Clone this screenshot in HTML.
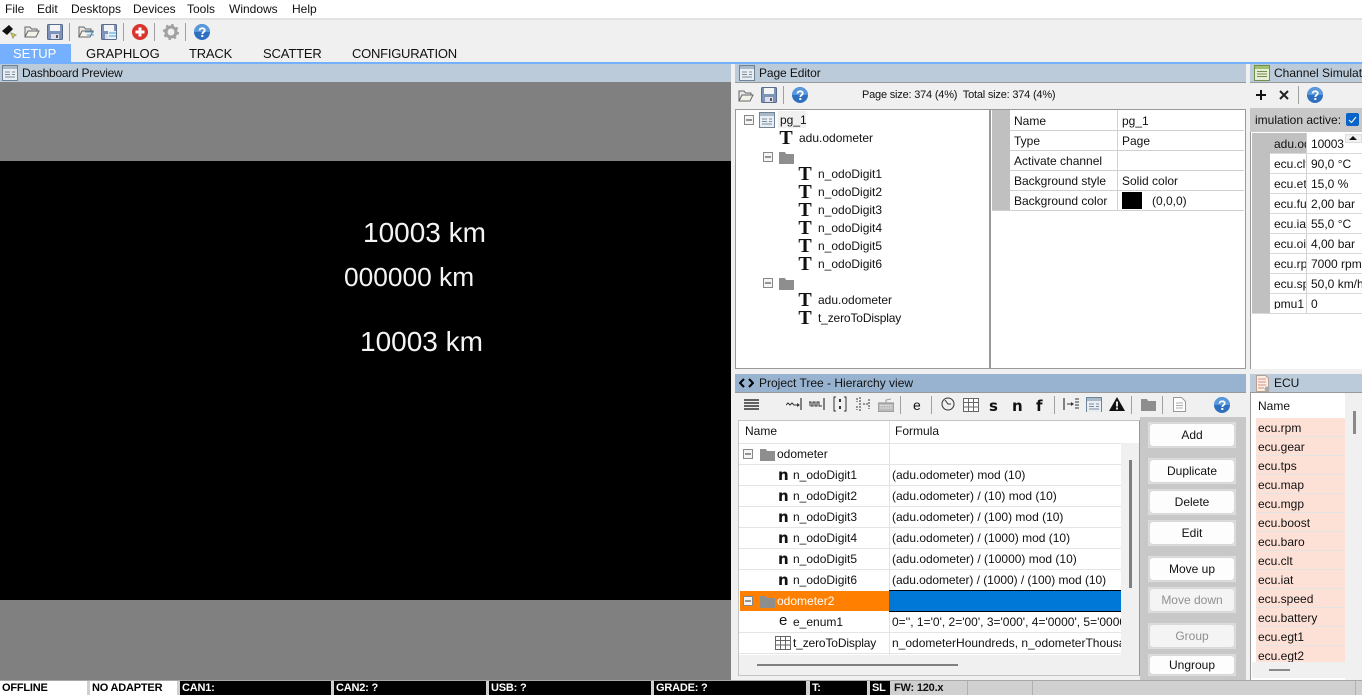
<!DOCTYPE html>
<html><head><meta charset="utf-8">
<style>
html,body{margin:0;padding:0}
body{width:1362px;height:695px;overflow:hidden;position:relative;background:#f0f0f0;font:12px "Liberation Sans",sans-serif;color:#111}
.a,.t,svg{position:absolute}
.t{white-space:nowrap;line-height:14px}
.hd{position:absolute;background:#bccbd9;height:18px;border-bottom:1px solid #999}
.v{position:absolute;width:1px;background:#a0a0a0}
.tt{position:absolute;font:bold 20px/20px "Liberation Serif",serif;color:#111;width:16px;text-align:center;margin-top:-1px}
.l{position:absolute;height:2px;background:#e4e4e4}
.b{position:absolute;left:1148px;width:88px;background:#dcdcdc}
.b div{position:absolute;left:1px;right:1px;top:1px;bottom:1px;background:#fdfdfd;border:1px solid #d8d8d8;border-radius:4px;text-align:center;font-size:12px;box-sizing:border-box}
.off div{background:#f4f4f4;color:#909090}
.s{position:absolute;top:681px;height:14px;font:bold 11px/15px "Liberation Sans",sans-serif;letter-spacing:-.2px;padding-left:2px;box-sizing:border-box;white-space:nowrap;overflow:hidden}
.k{background:#000;color:#fff}
.w{background:#fff;color:#000}
.m{width:10px;height:10px;position:absolute;border:1px solid #888;background:#f4f4f4;box-sizing:border-box}
.m:after{content:"";position:absolute;left:1px;right:1px;top:3px;height:2px;background:#555;transform:scaleY(.6)}
.n{position:absolute;font:bold 15px/14px "DejaVu Sans",sans-serif;color:#111}
.p{position:absolute;left:1256px;width:87px;height:18px;background:#fde0d6;border-bottom:1px solid #e4e4e4;line-height:20px;padding-left:2px;box-sizing:content-box}
.tab{font-size:13px;line-height:15px}
</style></head><body>
<svg width="0" height="0" style="position:absolute"><defs>
<g id="open"><path d="M1 13V3h5l1.500 2H13v2" fill="#e8e8e8" stroke="#666"/><path d="M1 13l3-6h11l-3 6z" fill="#f2f2e8" stroke="#666"/></g>
<g id="save"><rect x=".5" y=".5" width="15" height="15" rx="1" fill="#7d93b8" stroke="#5a6c8c"/><rect x="3" y="1" width="10" height="6" fill="#f4f4f4"/><rect x="4" y="10" width="8" height="5" fill="#dde"/><rect x="9" y="11" width="2" height="3" fill="#556"/></g>
<g id="help"><circle cx="8" cy="8" r="8" fill="#2f6fc0"/><path d="M0 8a8 8 0 0 1 16 0z" fill="#5a98dc"/><path d="M5.500 6.500C5.500 3.500 10.800 3.500 10.800 6.300 10.800 8 8.300 8 8.300 10" fill="none" stroke="#fff" stroke-width="1.800"/><rect x="7.300" y="11" width="2" height="2" fill="#fff"/></g>
<g id="win"><rect x=".5" y=".5" width="15" height="15" fill="#e8eef2" stroke="#6e8496"/><rect x="1" y="1" width="14" height="3" fill="#a8bac8"/><path d="M3 7h5M3 9.500h5M3 12h10M10 7h3M10 9.500h3" stroke="#7a8fa0"/></g>
<g id="fold"><path d="M0 1h6l1 2h8v10H0z" fill="#8e8e8e"/></g>
<g id="tb"><rect x=".5" y=".5" width="15" height="13" fill="#fff" stroke="#666"/><path d="M.5 4.500h15M.5 9h15M5.500.5v13M10.500.5v13" stroke="#666"/></g>
</defs></svg>

<!-- menu -->
<div class="a" style="left:0;top:0;width:1362px;height:18px;background:#fff"></div>
<div class="a" style="left:0;top:18px;width:1362px;height:2px;background:#e2e2e2"></div>
<span class="t" style="left:5px;top:2px">File</span>
<span class="t" style="left:37px;top:2px">Edit</span>
<span class="t" style="left:71px;top:2px">Desktops</span>
<span class="t" style="left:133px;top:2px">Devices</span>
<span class="t" style="left:187px;top:2px">Tools</span>
<span class="t" style="left:229px;top:2px">Windows</span>
<span class="t" style="left:292px;top:2px">Help</span>

<!-- toolbar -->
<svg style="left:2px;top:24px" width="15" height="15"><path d="M0 7L7 1l4 4-6 6z" fill="#111"/><path d="M9 9l5 2-2 1-1 2z" fill="#f3e600" stroke="#997"/></svg>
<svg style="left:24px;top:24px" width="16" height="15"><use href="#open"/></svg>
<svg style="left:47px;top:24px" width="16" height="16"><use href="#save"/></svg>
<div class="v" style="left:69px;top:23px;height:18px"></div>
<svg style="left:78px;top:24px" width="16" height="15"><use href="#open"/><path d="M7 8h9M9 11h7" stroke="#4aa0d8"/></svg>
<svg style="left:101px;top:24px" width="16" height="16"><use href="#save"/><path d="M7 7h8v8H7z" fill="#e8f2f8"/><path d="M8 9h7M8 12h7" stroke="#4aa0d8"/></svg>
<div class="v" style="left:123px;top:23px;height:18px"></div>
<svg style="left:132px;top:24px" width="16" height="16"><circle cx="8" cy="8" r="8" fill="#d9352c"/><path d="M8 3.500v9M3.500 8h9" stroke="#fff" stroke-width="3"/></svg>
<div class="v" style="left:154px;top:23px;height:18px"></div>
<svg style="left:163px;top:24px" width="16" height="16"><circle cx="8" cy="8" r="5" fill="none" stroke="#a0a0a0" stroke-width="3"/><circle cx="8" cy="8" r="7" fill="none" stroke="#a0a0a0" stroke-width="2" stroke-dasharray="2.500 3"/></svg>
<div class="v" style="left:185px;top:23px;height:18px"></div>
<svg style="left:194px;top:24px" width="16" height="16"><use href="#help"/></svg>

<!-- tabs -->
<div class="a" style="left:0;top:44px;width:71px;height:18px;background:#75b0ff"></div>
<span class="t tab" style="left:13px;top:46px;color:#fff">SETUP</span>
<span class="t tab" style="left:86px;top:46px">GRAPHLOG</span>
<span class="t tab" style="left:189px;top:46px;letter-spacing:-.2px">TRACK</span>
<span class="t tab" style="left:263px;top:46px;letter-spacing:-.15px">SCATTER</span>
<span class="t tab" style="left:352px;top:46px;letter-spacing:-.25px">CONFIGURATION</span>
<div class="a" style="left:0;top:62px;width:1362px;height:2px;background:#75b0ff"></div>

<!-- dashboard -->
<div class="hd" style="left:0;top:64px;width:731px;border:0"></div>
<svg style="left:2px;top:65px" width="16" height="16"><use href="#win"/></svg>
<span class="t" style="left:22px;top:66px;letter-spacing:-.25px">Dashboard Preview</span>
<div class="a" style="left:0;top:82px;width:731px;height:598px;background:#808080"></div>
<div class="a" style="left:0;top:161px;width:731px;height:439px;background:#000"></div>
<span class="t" style="left:363px;top:217px;font-size:28px;line-height:32px;color:#f4f4f4">10003 km</span>
<span class="t" style="left:344px;top:261px;font-size:26.300px;line-height:32px;color:#f4f4f4">000000 km</span>
<span class="t" style="left:360px;top:326px;font-size:28px;line-height:32px;color:#f4f4f4">10003 km</span>

<!-- page editor -->
<div class="hd" style="left:735px;top:64px;width:511px"></div>
<svg style="left:739px;top:65px" width="16" height="16"><use href="#win"/></svg>
<span class="t" style="left:759px;top:66px;letter-spacing:-.1px">Page Editor</span>
<svg style="left:738px;top:88px" width="16" height="15"><use href="#open"/></svg>
<svg style="left:761px;top:87px" width="16" height="16"><use href="#save"/></svg>
<div class="v" style="left:783px;top:86px;height:18px"></div>
<svg style="left:792px;top:87px" width="16" height="16"><use href="#help"/></svg>
<span class="t" style="left:862px;top:88px;font-size:11px;letter-spacing:-.2px">Page size: 374 (4%)&nbsp; Total size: 374 (4%)</span>

<div class="a" style="left:735px;top:109px;width:255px;height:260px;background:#fff;border:1px solid #999;box-sizing:border-box"></div>
<div class="a" style="left:990px;top:109px;width:256px;height:260px;background:#fff;border:1px solid #999;box-sizing:border-box"></div>
<div class="m" style="left:744px;top:115px"></div>
<svg style="left:759px;top:112px" width="16" height="16"><use href="#win"/></svg>
<div class="a" style="left:778px;top:111px;width:28px;height:17px;background:#f0f0f0"></div>
<span class="t" style="left:780px;top:113px">pg_1</span>
<div class="tt" style="left:778px;top:129px">T</div><span class="t" style="left:799px;top:131px">adu.odometer</span>
<div class="m" style="left:763px;top:152px"></div>
<svg style="left:779px;top:151px" width="15" height="13"><use href="#fold"/></svg>
<div class="tt" style="left:797px;top:165px">T</div><span class="t" style="left:818px;top:167px">n_odoDigit1</span>
<div class="tt" style="left:797px;top:183px">T</div><span class="t" style="left:818px;top:185px">n_odoDigit2</span>
<div class="tt" style="left:797px;top:201px">T</div><span class="t" style="left:818px;top:203px">n_odoDigit3</span>
<div class="tt" style="left:797px;top:219px">T</div><span class="t" style="left:818px;top:221px">n_odoDigit4</span>
<div class="tt" style="left:797px;top:237px">T</div><span class="t" style="left:818px;top:239px">n_odoDigit5</span>
<div class="tt" style="left:797px;top:255px">T</div><span class="t" style="left:818px;top:257px">n_odoDigit6</span>
<div class="m" style="left:763px;top:278px"></div>
<svg style="left:779px;top:277px" width="15" height="13"><use href="#fold"/></svg>
<div class="tt" style="left:797px;top:291px">T</div><span class="t" style="left:818px;top:293px">adu.odometer</span>
<div class="tt" style="left:797px;top:309px">T</div><span class="t" style="left:818px;top:311px;letter-spacing:-.15px">t_zeroToDisplay</span>

<div class="a" style="left:992px;top:110px;width:18px;height:100px;background:#c0c0c0"></div>
<div class="a" style="left:1117px;top:110px;width:1px;height:101px;background:#d0d0d0"></div>
<div class="l" style="left:1010px;top:130px;width:234px;height:1px;background:#d0d0d0"></div>
<div class="l" style="left:1010px;top:150px;width:234px;height:1px;background:#d0d0d0"></div>
<div class="l" style="left:1010px;top:170px;width:234px;height:1px;background:#d0d0d0"></div>
<div class="l" style="left:1010px;top:190px;width:234px;height:1px;background:#d0d0d0"></div>
<div class="l" style="left:992px;top:210px;width:252px;height:1px;background:#d0d0d0"></div>
<span class="t" style="left:1014px;top:114px">Name</span><span class="t" style="left:1122px;top:114px">pg_1</span>
<span class="t" style="left:1014px;top:134px">Type</span><span class="t" style="left:1122px;top:134px">Page</span>
<span class="t" style="left:1014px;top:154px">Activate channel</span>
<span class="t" style="left:1014px;top:174px">Background style</span><span class="t" style="left:1122px;top:174px">Solid color</span>
<span class="t" style="left:1014px;top:194px">Background color</span>
<div class="a" style="left:1122px;top:192px;width:20px;height:17px;background:#000"></div>
<span class="t" style="left:1152px;top:194px">(0,0,0)</span>

<!-- channel simulator -->
<div class="hd" style="left:1250px;top:64px;width:112px"></div>
<svg style="left:1254px;top:65px" width="16" height="16"><rect x=".5" y=".5" width="15" height="15" fill="#e6efd6" stroke="#6f8f4a"/><rect x="1" y="1" width="14" height="3" fill="#a3c070"/><path d="M3 6.500h10M3 9h10M3 11.500h10" stroke="#6f8f4a"/></svg>
<span class="t" style="left:1274px;top:66px">Channel Simulat</span>
<svg style="left:1255px;top:89px" width="12" height="12"><path d="M6 1v10M1 6h10" stroke="#111" stroke-width="2"/></svg>
<svg style="left:1279px;top:90px" width="10" height="10"><path d="M1 1l8 8M9 1l-8 8" stroke="#222" stroke-width="2"/></svg>
<div class="v" style="left:1298px;top:86px;height:18px"></div>
<svg style="left:1307px;top:87px" width="16" height="16"><use href="#help"/></svg>
<div class="a" style="left:1250px;top:108px;width:112px;height:24px;background:#c8c8c8"></div>
<span class="t" style="left:1255px;top:113px">imulation active:</span>
<svg style="left:1346px;top:113px" width="13" height="13"><rect width="13" height="13" rx="2" fill="#0a64c8"/><path d="M3 7l2.500 2.500L10 4" fill="none" stroke="#fff"/></svg>
<div class="a" style="left:1250px;top:132px;width:112px;height:237px;background:#fff;border-left:1px solid #999;box-sizing:border-box"></div>
<div class="a" style="left:1252px;top:133px;width:18px;height:180px;background:#c0c0c0"></div>
<div class="a" style="left:1270px;top:133px;width:36px;height:20px;background:#c0c0c0"></div>
<div class="a" style="left:1306px;top:133px;width:1px;height:181px;background:#d0d0d0"></div>
<div class="l" style="left:1270px;top:153px;width:92px;height:1px;background:#d8d8d8"></div>
<div class="l" style="left:1270px;top:173px;width:92px;height:1px;background:#d8d8d8"></div>
<div class="l" style="left:1270px;top:193px;width:92px;height:1px;background:#d8d8d8"></div>
<div class="l" style="left:1270px;top:213px;width:92px;height:1px;background:#d8d8d8"></div>
<div class="l" style="left:1270px;top:233px;width:92px;height:1px;background:#d8d8d8"></div>
<div class="l" style="left:1270px;top:253px;width:92px;height:1px;background:#d8d8d8"></div>
<div class="l" style="left:1270px;top:273px;width:92px;height:1px;background:#d8d8d8"></div>
<div class="l" style="left:1270px;top:293px;width:92px;height:1px;background:#d8d8d8"></div>
<div class="l" style="left:1252px;top:313px;width:110px;height:1px;background:#d8d8d8"></div>
<div class="a" style="left:1274px;top:137px;width:32px;height:172px;overflow:hidden">
<span class="t" style="left:0;top:0">adu.odo</span><span class="t" style="left:0;top:20px">ecu.clt</span><span class="t" style="left:0;top:40px">ecu.eth</span><span class="t" style="left:0;top:60px">ecu.fuel</span><span class="t" style="left:0;top:80px">ecu.iat</span><span class="t" style="left:0;top:100px">ecu.oil</span><span class="t" style="left:0;top:120px">ecu.rpm</span><span class="t" style="left:0;top:140px">ecu.spd</span><span class="t" style="left:0;top:160px">pmu1</span>
</div>
<div class="a" style="left:1311px;top:137px;width:33px;height:14px;overflow:hidden"><span class="t" style="left:0;top:0;letter-spacing:-.1px">10003,0</span></div>
<div class="a" style="left:1345px;top:134px;width:17px;height:9px;background:#f0f0f0;border:1px solid #ddd;box-sizing:border-box"></div>
<svg style="left:1349px;top:136px" width="8" height="5"><path d="M4 0l4 4H0z" fill="#111"/></svg>
<span class="t" style="left:1311px;top:157px">90,0 °C</span>
<span class="t" style="left:1311px;top:177px">15,0 %</span>
<span class="t" style="left:1311px;top:197px">2,00 bar</span>
<span class="t" style="left:1311px;top:217px">55,0 °C</span>
<span class="t" style="left:1311px;top:237px">4,00 bar</span>
<span class="t" style="left:1311px;top:257px">7000 rpm</span>
<span class="t" style="left:1311px;top:277px">50,0 km/h</span>
<span class="t" style="left:1311px;top:297px">0</span>

<!-- project tree -->
<div class="a" style="left:735px;top:374px;width:511px;height:18px;background:#98b3d0;border-bottom:1px solid #999"></div>
<svg style="left:739px;top:378px" width="15" height="10"><path d="M5 1L1 5l4 4M10 1l4 4-4 4" fill="none" stroke="#000" stroke-width="2"/></svg>
<span class="t" style="left:759px;top:376px">Project Tree - Hierarchy view</span>

<svg style="left:744px;top:398px" width="15" height="13"><path d="M0 2h15M0 5h15M0 8h15M0 11h15" stroke="#333" stroke-width="1.500"/></svg>
<svg style="left:786px;top:396px" width="16" height="16"><path d="M0 9l2-2 2 2 2-2 2 2h3" fill="none" stroke="#333"/><path d="M15 2v12" stroke="#111"/><path d="M11 7l3 2-3 2z" fill="#333"/></svg>
<svg style="left:809px;top:396px" width="16" height="16"><path d="M0 10V6h2v4h2V6h2v4h2V6h2v4h3" fill="none" stroke="#333"/><path d="M15 2v12" stroke="#111"/></svg>
<svg style="left:833px;top:396px" width="14" height="16"><path d="M3 1H1v14h2M11 1h2v14h-2" fill="none" stroke="#333"/><path d="M7 3v3M7 10v3" stroke="#333" stroke-width="2"/></svg>
<svg style="left:855px;top:396px" width="16" height="16"><path d="M2 2v4M2 10v4M5 1v14M8 8h5M14 3v10" stroke="#333" stroke-dasharray="2 1"/></svg>
<svg style="left:878px;top:398px" width="16" height="14"><rect y="5" width="16" height="9" rx="1" fill="#bbb" stroke="#888"/><path d="M2 7.500h12M2 10h12" stroke="#eee" stroke-dasharray="1.500 1"/><path d="M8 5V2l5-1" fill="none" stroke="#999"/></svg>
<div class="v" style="left:900px;top:396px;height:18px"></div>
<span class="t" style="left:913px;top:397px;font-size:14px;line-height:16px">e</span>
<div class="v" style="left:931px;top:396px;height:18px"></div>
<svg style="left:941px;top:397px" width="14" height="14"><circle cx="7" cy="7" r="6" fill="none" stroke="#333"/><path d="M4 3l3 4h3" fill="none" stroke="#333"/></svg>
<svg style="left:963px;top:398px" width="16" height="14"><use href="#tb"/></svg>
<div class="n" style="left:989px;top:399px">s</div>
<div class="n" style="left:1012px;top:399px">n</div>
<div class="n" style="left:1036px;top:399px">f</div>
<div class="v" style="left:1054px;top:396px;height:18px"></div>
<svg style="left:1063px;top:396px" width="16" height="16"><path d="M1 2v12" stroke="#111"/><path d="M4 8h6" stroke="#333"/><path d="M8 6l3 2-3 2z" fill="#333"/><path d="M13 2v12M15 2v12" stroke="#333" stroke-dasharray="2 1"/></svg>
<svg style="left:1086px;top:397px" width="16" height="15"><use href="#win"/></svg>
<svg style="left:1109px;top:397px" width="16" height="14"><path d="M8 0l8 14H0z" fill="#111"/><path d="M8 4.500v5M8 10.500v2" stroke="#fff" stroke-width="1.800"/></svg>
<div class="v" style="left:1131px;top:396px;height:18px"></div>
<svg style="left:1141px;top:398px" width="15" height="13"><use href="#fold"/></svg>
<div class="v" style="left:1162px;top:396px;height:18px"></div>
<svg style="left:1173px;top:397px" width="13" height="15"><path d="M.5.500h8l4 4v10H.500z" fill="#fff" stroke="#999"/><path d="M3 6h7M3 8.500h7M3 11h7" stroke="#aaa"/></svg>
<svg style="left:1214px;top:397px" width="16" height="16"><use href="#help"/></svg>

<div class="a" style="left:738px;top:420px;width:402px;height:256px;background:#fff;border:1px solid #c4c4c4;border-right:1px solid #999;box-sizing:border-box"></div>
<div class="a" style="left:1140px;top:417px;width:106px;height:263px;background:#c8c8c8"></div>
<div class="a" style="left:1121px;top:443px;width:18px;height:212px;background:#f0f0f0"></div>
<div class="a" style="left:1129px;top:460px;width:3px;height:128px;background:#7f7f7f"></div>
<div class="a" style="left:889px;top:421px;width:1px;height:234px;background:#e2e2e2"></div>
<div class="l" style="left:739px;top:443px;width:382px;height:1px"></div>
<div class="l" style="left:739px;top:464px;width:382px;height:1px"></div>
<div class="l" style="left:739px;top:485px;width:382px;height:1px"></div>
<div class="l" style="left:739px;top:506px;width:382px;height:1px"></div>
<div class="l" style="left:739px;top:527px;width:382px;height:1px"></div>
<div class="l" style="left:739px;top:548px;width:382px;height:1px"></div>
<div class="l" style="left:739px;top:569px;width:382px;height:1px"></div>
<div class="l" style="left:739px;top:632px;width:382px;height:1px"></div>
<div class="l" style="left:739px;top:653px;width:382px;height:1px"></div>
<span class="t" style="left:745px;top:424px">Name</span>
<span class="t" style="left:895px;top:424px">Formula</span>
<div class="m" style="left:743px;top:449px"></div>
<svg style="left:760px;top:448px" width="15" height="13"><use href="#fold"/></svg>
<span class="t" style="left:777px;top:447px">odometer</span>
<div class="n" style="left:778px;top:468px">n</div><span class="t" style="left:793px;top:468px">n_odoDigit1</span><span class="t" style="left:892px;top:468px">(adu.odometer) mod (10)</span>
<div class="n" style="left:778px;top:489px">n</div><span class="t" style="left:793px;top:489px">n_odoDigit2</span><span class="t" style="left:892px;top:489px">(adu.odometer) / (10) mod (10)</span>
<div class="n" style="left:778px;top:510px">n</div><span class="t" style="left:793px;top:510px">n_odoDigit3</span><span class="t" style="left:892px;top:510px">(adu.odometer) / (100) mod (10)</span>
<div class="n" style="left:778px;top:531px">n</div><span class="t" style="left:793px;top:531px">n_odoDigit4</span><span class="t" style="left:892px;top:531px">(adu.odometer) / (1000) mod (10)</span>
<div class="n" style="left:778px;top:552px">n</div><span class="t" style="left:793px;top:552px">n_odoDigit5</span><span class="t" style="left:892px;top:552px">(adu.odometer) / (10000) mod (10)</span>
<div class="n" style="left:778px;top:573px">n</div><span class="t" style="left:793px;top:573px">n_odoDigit6</span><span class="t" style="left:892px;top:573px;letter-spacing:-.05px">(adu.odometer) / (1000) / (100) mod (10)</span>
<div class="a" style="left:740px;top:591px;width:149px;height:20px;background:#ff8000"></div>
<div class="a" style="left:889px;top:590px;width:232px;height:22px;background:#0078d7;border-top:1px solid #000;border-bottom:1px solid #000;box-sizing:border-box"></div>
<div class="m" style="left:743px;top:596px"></div>
<svg style="left:760px;top:595px" width="15" height="13"><use href="#fold"/></svg>
<span class="t" style="left:777px;top:594px;color:#fff">odometer2</span>
<div class="a" style="left:892px;top:615px;width:229px;height:14px;overflow:hidden"><span class="t" style="left:0;top:0">0='', 1='0', 2='00', 3='000', 4='0000', 5='00000'</span></div>
<span class="t" style="left:779px;top:613px;font-size:15px;line-height:16px">e</span><span class="t" style="left:793px;top:615px">e_enum1</span>
<svg style="left:775px;top:636px" width="16" height="14"><use href="#tb"/></svg>
<span class="t" style="left:793px;top:636px;letter-spacing:-.15px">t_zeroToDisplay</span>
<div class="a" style="left:892px;top:636px;width:229px;height:14px;overflow:hidden"><span class="t" style="left:0;top:0">n_odometerHoundreds, n_odometerThousands</span></div>
<div class="a" style="left:739px;top:655px;width:400px;height:20px;background:#f0f0f0"></div>
<div class="a" style="left:757px;top:664px;width:201px;height:2px;background:#7f7f7f"></div>

<div class="b" style="top:422px;height:26px"><div style="line-height:22px">Add</div></div>
<div class="b" style="top:458px;height:26px"><div style="line-height:22px">Duplicate</div></div>
<div class="b" style="top:489px;height:26px"><div style="line-height:22px">Delete</div></div>
<div class="b" style="top:520px;height:26px"><div style="line-height:22px">Edit</div></div>
<div class="b" style="top:556px;height:26px"><div style="line-height:22px">Move up</div></div>
<div class="b off" style="top:587px;height:26px"><div style="line-height:22px">Move down</div></div>
<div class="b off" style="top:623px;height:26px"><div style="line-height:22px">Group</div></div>
<div class="b" style="top:654px;height:22px"><div style="line-height:18px">Ungroup</div></div>

<!-- ECU -->
<div class="hd" style="left:1250px;top:374px;width:112px"></div>
<svg style="left:1256px;top:375px" width="14" height="17"><path d="M.5.500h9l3 3v13H.500z" fill="#fbeee6" stroke="#b8a090"/><path d="M2 4h8M2 7h8M2 10h8M2 13h6" stroke="#d89080"/><circle cx="11" cy="14" r="2.500" fill="#aaa"/></svg>
<span class="t" style="left:1274px;top:376px">ECU</span>
<div class="a" style="left:1250px;top:393px;width:95px;height:287px;background:#fff;border-left:1px solid #999;box-sizing:border-box"></div>
<div class="a" style="left:1345px;top:393px;width:17px;height:287px;background:#f0f0f0"></div>
<div class="a" style="left:1353px;top:411px;width:3px;height:23px;background:#8a8a8a"></div>
<span class="t" style="left:1258px;top:399px">Name</span>
<div class="p" style="top:418px">ecu.rpm</div>
<div class="p" style="top:437px">ecu.gear</div>
<div class="p" style="top:456px">ecu.tps</div>
<div class="p" style="top:475px">ecu.map</div>
<div class="p" style="top:494px">ecu.mgp</div>
<div class="p" style="top:513px">ecu.boost</div>
<div class="p" style="top:532px">ecu.baro</div>
<div class="p" style="top:551px">ecu.clt</div>
<div class="p" style="top:570px">ecu.iat</div>
<div class="p" style="top:589px">ecu.speed</div>
<div class="p" style="top:608px">ecu.battery</div>
<div class="p" style="top:627px">ecu.egt1</div>
<div class="p" style="top:646px;height:16px;overflow:hidden;border:0">ecu.egt2</div>
<div class="a" style="left:1252px;top:662px;width:93px;height:16px;background:#f0f0f0"></div>
<div class="a" style="left:1269px;top:669px;width:21px;height:2px;background:#8a8a8a"></div>

<!-- status -->
<div class="a" style="left:0;top:680px;width:1362px;height:15px;background:#d0d0d0;border-top:1px solid #a8a8a8;box-sizing:border-box"></div>
<div class="s w" style="left:0;width:87px">OFFLINE</div>
<div class="s w" style="left:90px;width:87px">NO ADAPTER</div>
<div class="s k" style="left:180px;width:151px">CAN1:</div>
<div class="s k" style="left:334px;width:152px">CAN2: ?</div>
<div class="s k" style="left:489px;width:162px">USB: ?</div>
<div class="s k" style="left:654px;width:152px">GRADE: ?</div>
<div class="s k" style="left:810px;width:57px">T:</div>
<div class="s k" style="left:870px;width:20px">SL</div>
<div class="s" style="left:892px;width:70px;color:#111">FW: 120.x</div>
<div class="a" style="left:967px;top:681px;width:1px;height:14px;background:#b0b0b0"></div>
<div class="a" style="left:1032px;top:681px;width:1px;height:14px;background:#b0b0b0"></div>
<div class="a" style="left:1355px;top:681px;width:1px;height:14px;background:#b0b0b0"></div>
</body></html>
